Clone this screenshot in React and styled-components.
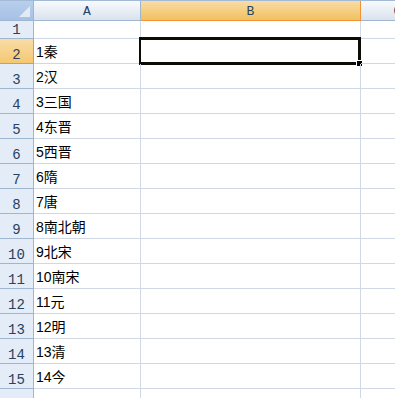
import React from 'react';
import styled, { createGlobalStyle } from 'styled-components';

const GlobalStyle = createGlobalStyle`
  html, body {
    margin: 0;
    padding: 0;
    background: #ffffff;
    overflow: hidden;
  }
`;

const Sheet = styled.div`
  width: 395px;
  height: 398px;
  overflow: hidden;
  border-top: 1px solid #a3bad6;
  box-sizing: border-box;
`;

const Row = styled.div`
  display: grid;
  grid-template-columns: 34px 107px 220px 74px;
  height: ${(p) => p.h}px;
`;

const Corner = styled.div`
  background: linear-gradient(#b9cfec, #a6c0e6);
  border-right: 1px solid #9eb6ce;
  border-bottom: 1px solid #9eb6ce;
  box-sizing: border-box;
  display: flex;
  align-items: flex-end;
  justify-content: flex-end;
  padding: 0 3px 3px 0;
`;

const ColHead = styled.div`
  background: ${(p) =>
    p.active
      ? 'linear-gradient(#f9dca6, #f1c15f)'
      : 'linear-gradient(#f8fafd, #dae2ee)'};
  border-right: 1px solid ${(p) => (p.active ? '#f29436' : '#9eb6ce')};
  border-bottom: 1px solid ${(p) => (p.active ? '#f29436' : '#9eb6ce')};
  box-sizing: border-box;
  display: flex;
  align-items: center;
  justify-content: center;
  font-family: 'Liberation Mono', monospace;
  font-size: 13px;
  color: #27415f;
  padding-top: 2px;
`;

const RowHead = styled.div`
  background: ${(p) => (p.active ? 'linear-gradient(#f9dca6, #f4c872)' : '#e4ecf7')};
  border-right: 1px solid ${(p) => (p.active ? '#f29436' : '#9eb6ce')};
  border-bottom: 1px solid ${(p) => (p.active ? '#f29436' : '#9eb6ce')};
  box-sizing: border-box;
  display: flex;
  align-items: flex-end;
  justify-content: center;
  font-family: 'Liberation Mono', monospace;
  font-size: 14px;
  line-height: 1;
  color: #27415f;
  padding-bottom: 1px;
`;

const Cell = styled.div`
  border-right: 1px solid #d0d7e5;
  border-bottom: 1px solid #d0d7e5;
  box-sizing: border-box;
  position: relative;
  display: flex;
  align-items: flex-end;
  padding: 0 0 4px 2px;
  font-family: 'Liberation Sans', 'Noto Sans CJK SC', sans-serif;
  font-size: 14px;
  line-height: 1;
  color: #000000;
  white-space: nowrap;
`;

const Selection = styled.div`
  position: absolute;
  left: -2px;
  top: -2px;
  right: -1px;
  bottom: -2px;
  border: 3px solid #0d0b05;
  border-left-width: 2px;
  pointer-events: none;
`;

const FillHandle = styled.div`
  position: absolute;
  right: -5px;
  bottom: -5px;
  width: 5px;
  height: 5px;
  background: #000000;
  border: 1px solid #ffffff;
`;

const items = [
  '', '1秦', '2汉', '3三国', '4东晋', '5西晋', '6隋', '7唐', '8南北朝',
  '9北宋', '10南宋', '11元', '12明', '13清', '14今', '',
];

export default function App() {
  return (
    <>
      <GlobalStyle />
      <Sheet>
        <Row h={20}>
          <Corner>
            <svg width="11" height="11" viewBox="0 0 11 11">
              <polygon points="11,0 11,11 0,11" fill="#e2eaf6" />
            </svg>
          </Corner>
          <ColHead>A</ColHead>
          <ColHead active>B</ColHead>
          <ColHead>C</ColHead>
        </Row>
        {items.map((text, i) => {
          const n = i + 1;
          const active = n === 2;
          return (
            <Row key={n} h={n === 1 ? 18 : 25}>
              <RowHead active={active}>{n}</RowHead>
              <Cell>{text}</Cell>
              <Cell>
                {active && (
                  <Selection>
                    <FillHandle />
                  </Selection>
                )}
              </Cell>
              <Cell />
            </Row>
          );
        })}
      </Sheet>
    </>
  );
}
